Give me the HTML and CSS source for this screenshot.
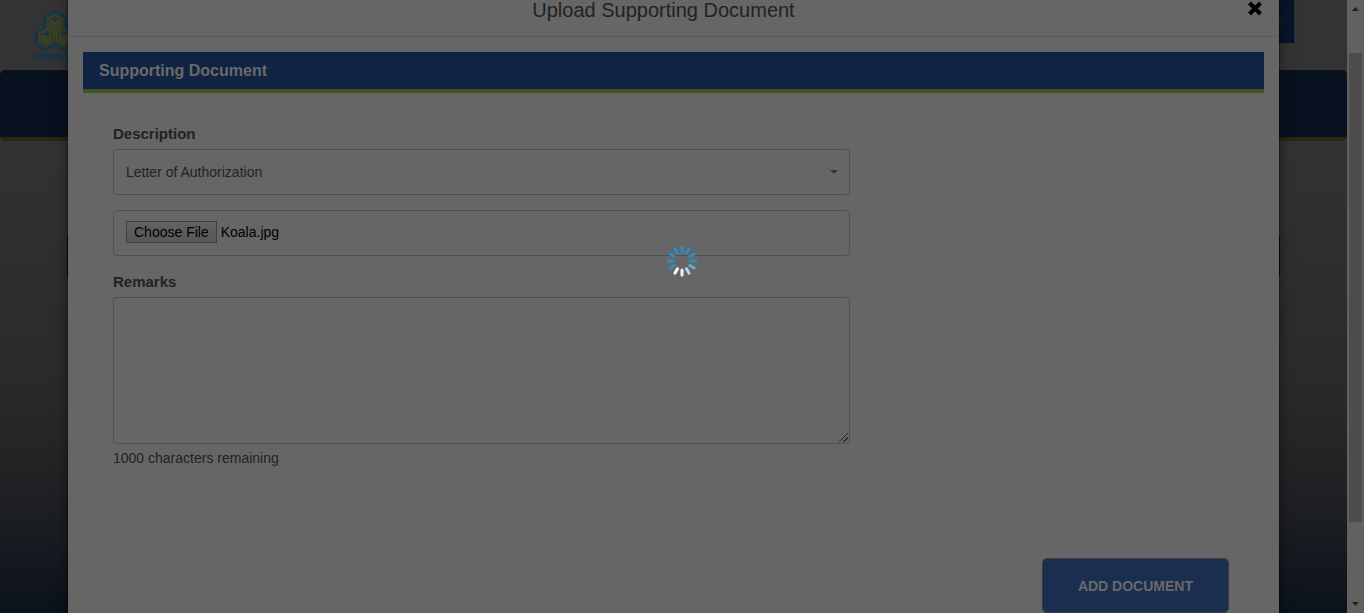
FILE: index.html
```html
<!DOCTYPE html>
<html lang="en">
<head>
<meta charset="utf-8">
<meta name="viewport" content="width=device-width, initial-scale=1">
<title>Upload Supporting Document</title>
<link rel="stylesheet" href="styles.css">
</head>
<body>
<div class="window">
  <div class="viewport">
    <div class="site">
      <header class="site-header">
        <svg class="logo" viewBox="0 0 40 50" aria-label="PERKESO" role="img">
          <g fill="none" stroke-linejoin="miter">
            <g stroke="#3a4822" stroke-width="1.500">
              <path id="cell" d="M20 5 27 9V16.500L20 20.500 13 16.500V9ZM16 11V15L20 17.500 24 15V11L20 13.500ZM20 13.500V17.500"/>
              <use href="#cell" x="-8.500" y="14"/>
              <use href="#cell" x="8.500" y="14"/>
            </g>
            <path stroke="#083a4d" stroke-width="2" d="M20 1 30.500 7V18.500L39 23.500V34L29 40 20 34.500 11 40 1 34V23.500L9.500 18.500V7Z"/>
          </g>
          <g fill="#083a4d"><circle cx="20" cy="10" r="1.400"/><circle cx="11.500" cy="24" r="1.400"/><circle cx="28.500" cy="24" r="1.400"/></g>
          <text class="logo-text" x="0" y="49">PERKESO</text>
        </svg>
        <div class="user-box"><span class="user-dot"></span></div>
      </header>
      <nav class="site-nav"></nav>
      <main class="site-main"><div class="site-strip"></div></main>
    </div>

    <section class="modal" role="dialog" aria-labelledby="dialog-title">
      <header class="modal-header">
        <h1 class="modal-title" id="dialog-title">Upload Supporting Document</h1>
        <button class="close" type="button" aria-label="Close">
          <svg viewBox="0 0 16 16" width="16" height="16"><path d="M2.500 2 13.500 13M13.500 2 2.500 13" stroke="#000" stroke-width="4"/></svg>
        </button>
      </header>
      <form class="modal-body">
        <h2 class="banner">Supporting Document</h2>
        <div class="fields">
          <label class="label" for="description">Description</label>
          <div class="select-wrap">
            <select class="control" id="description"><option>Letter of Authorization</option></select>
            <svg class="caret" viewBox="0 0 8 4" width="8" height="4"><path d="M0 0H8L4 4Z" fill="#383838"/></svg>
          </div>
          <input class="control file" id="file" type="file" aria-label="Document file">
          <label class="label" for="remarks">Remarks</label>
          <textarea class="control remarks" id="remarks"></textarea>
          <p class="hint">1000 characters remaining</p>
        </div>
        <div class="actions"><button class="add" type="button">ADD DOCUMENT</button></div>
      </form>
    </section>
  </div>

  <div class="scrollbar" aria-hidden="true">
    <svg viewBox="0 0 7 4" width="7" height="4"><path d="M0 4H7L3.500 0Z" fill="#202020"/></svg>
    <div class="track"><div class="thumb"></div></div>
    <svg viewBox="0 0 7 4" width="7" height="4"><path d="M0 0H7L3.500 4Z" fill="#202020"/></svg>
  </div>

  <div class="loading" role="status" aria-label="Loading">
    <svg viewBox="-16 -16 32 32" width="32" height="32" stroke-width="3" stroke-linecap="round">
      <g stroke="#308cbe">
        <path d="M0-9V-14"/>
        <path d="M0-9V-14" transform="rotate(30)"/>
        <path d="M0-9V-14" transform="rotate(60)"/>
        <path d="M0-9V-14" transform="rotate(90)"/>
        <path d="M0-9V-14" transform="rotate(240)"/>
        <path d="M0-9V-14" transform="rotate(270)"/>
        <path d="M0-9V-14" transform="rotate(300)"/>
        <path d="M0-9V-14" transform="rotate(330)"/>
      </g>
      <path stroke="#65add2" d="M0-9V-14" transform="rotate(120)"/>
      <path stroke="#b4d9ea" d="M0-9V-14" transform="rotate(150)"/>
      <path stroke="#e9f6fb" d="M0-9V-14" transform="rotate(180)"/>
      <path stroke="#ffffff" d="M0-9V-14" transform="rotate(210)"/>
    </svg>
  </div>
</div>
<script src="script.js"></script>
</body>
</html>
```

FILE: styles.css
```css
* {
  box-sizing: border-box;
}

body {
  margin: 0;
  font-family: "Liberation Sans", Arial, sans-serif;
  font-size: 14px;
  line-height: 20px;
  color: #222;
  background: #333;
}

.window {
  position: relative;
  display: grid;
  grid-template-columns: 1fr 17px;
  height: 100vh;
  overflow: hidden;
}

.viewport {
  position: relative;
  overflow: hidden;
}

.site {
  position: absolute;
  inset: 0;
  display: flex;
  flex-direction: column;
  background: linear-gradient(#333 0, #333132 25%, #302f2d 40%, #2c292a 62%, #222225 78%, #161a20 90%, #0b121b 100%);
}

.site-header {
  display: flex;
  justify-content: space-between;
  align-items: flex-start;
  height: 70px;
  padding: 0 53px 0 35px;
  background: #333;
}

.logo {
  width: 40px;
  height: 50px;
  margin-top: 10px;
  overflow: visible;
}

.logo-text {
  font-size: 8px;
  font-weight: bold;
  fill: #083a4d;
  stroke: #083a4d;
  stroke-width: 0.3px;
}

.user-box {
  display: flex;
  justify-content: flex-end;
  align-items: center;
  width: 200px;
  height: 43px;
  padding-right: 10px;
  background: #08142a;
}

.user-dot {
  width: 12px;
  height: 12px;
  border-radius: 50%;
  background: #101a2c;
}

.site-nav {
  height: 71px;
  border-bottom: 4px solid #222b10;
  border-radius: 5px;
  background: #07111f;
}

.site-main {
  display: flex;
  padding: 95px 67px 0;
}

.site-strip {
  flex: 1;
  height: 40px;
  background: #060914;
}

.modal {
  position: relative;
  min-height: 100%;
  margin: 0 68px;
  background: #666;
  box-shadow: 0 0 12px rgba(0, 0, 0, 0.5), 0 0 0 1px rgba(0, 0, 0, 0.25);
}

.modal-header {
  display: flex;
  align-items: flex-start;
  height: 37px;
  padding: 0 16px 0 12px;
  border-bottom: 1px solid #5b5b5b;
}

.modal-title {
  flex: 1;
  margin: 0;
  font-size: 20px;
  font-weight: normal;
  line-height: 20px;
  text-align: center;
}

.close {
  padding: 1px 0 0;
  border: 0;
  background: none;
  line-height: 0;
}

.modal-body {
  padding: 15px;
}

.banner {
  margin: 0;
  padding: 0 16px;
  border-bottom: 4px solid #41551f;
  background: #112342;
  color: #6a6a6a;
  font-size: 16px;
  line-height: 37px;
}

.fields {
  width: calc((100% - 30px) * 2 / 3);
  margin-left: 15px;
  padding: 31px 15px 0;
}

.label {
  display: block;
  margin-bottom: 5px;
  font-size: 15px;
  font-weight: bold;
  line-height: 20px;
}

.control {
  display: block;
  width: 100%;
  height: 46px;
  margin: 0;
  padding: 0 12px;
  border: 1px solid #505050;
  border-radius: 4px;
  background: transparent;
  color: #222;
  font: inherit;
  appearance: none;
}

.select-wrap {
  position: relative;
  margin-bottom: 15px;
}

.caret {
  position: absolute;
  top: 21px;
  right: 12px;
}

.file {
  margin-bottom: 16px;
  padding: 10px 12px;
  color: #000;
}

.file::file-selector-button {
  height: 22px;
  margin: 0 4px 0 0;
  padding: 0 7px;
  border: 1px solid #404040;
  border-radius: 0;
  background: linear-gradient(#626262, #585858);
  color: #000;
  font: inherit;
}

.remarks {
  height: 147px;
  resize: vertical;
}

.remarks::-webkit-resizer {
  background: linear-gradient(135deg, transparent 0 46%, #2b2b2b 46% 54%, transparent 54% 71%, #2b2b2b 71% 79%, transparent 79%) 5px 5px / 9px 9px no-repeat;
}

.hint {
  margin: 4px 0 0;
}

.actions {
  display: flex;
  justify-content: flex-end;
  margin-top: 90px;
  padding-right: 35px;
}

.add {
  height: 55px;
  padding: 0 35px;
  border: 1px solid #3b3b3b;
  border-radius: 5px;
  background: #1a2e50;
  color: #6a6a6a;
  font: inherit;
  font-weight: bold;
}

.scrollbar {
  display: flex;
  flex-direction: column;
  align-items: center;
  padding: 7px 0;
  background: #616161;
}

.track {
  flex: 1;
  width: 13px;
  padding-top: 42px;
}

.thumb {
  height: 85.4%;
  background: #4d4d4d;
}

.loading {
  position: absolute;
  top: 245px;
  left: 50%;
  width: 32px;
  height: 32px;
  margin-left: -16px;
}
```

FILE: script.js
```javascript
const picked = new DataTransfer();
picked.items.add(new File([""], "Koala.jpg", { type: "image/jpeg" }));
document.getElementById("file").files = picked.files;
```
